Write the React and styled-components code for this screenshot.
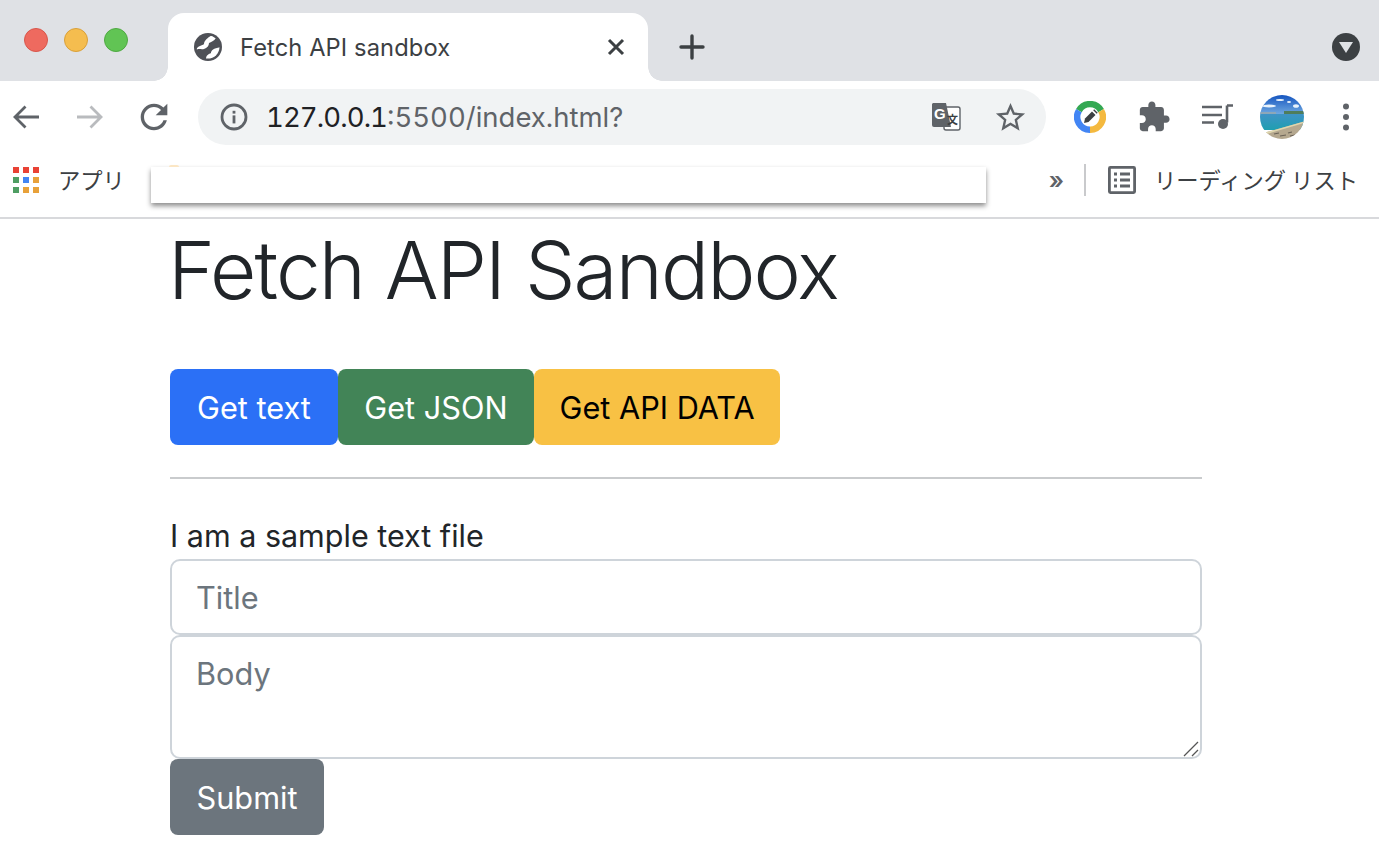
import React from 'react';
import styled, { createGlobalStyle } from 'styled-components';

const GlobalStyle = createGlobalStyle`
  * { box-sizing: border-box; }
  html, body { margin: 0; padding: 0; background: #fff; }
  body { font-family: Inter, "Noto Sans", sans-serif; color: #212529; }
`;

const colors = {
  strip: '#dfe1e5',
  icon: '#5f6368',
  dark: '#3c4043',
  omni: '#f1f3f4',
};

const App = () => {
  return (
    <>
      <GlobalStyle />
      <Header>
        <TabStrip>
          <Lights>
            <Light $color="#ee6a5f" $edge="#d8564b" />
            <Light $color="#f5bd4f" $edge="#d9a03a" />
            <Light $color="#61c454" $edge="#4fa942" />
          </Lights>
          <Tab>
            <svg width="28" height="28" viewBox="0 0 28 28">
              <defs>
                <clipPath id="globe">
                  <circle cx="14" cy="14" r="11.5" />
                </clipPath>
              </defs>
              <circle cx="14" cy="14" r="14" fill="#4f5157" />
              <g clipPath="url(#globe)" fill="#fff">
                <path d="M2 17C4 12 8 13 10 11 10 8 13 5 18 2L22 5C20 8 17 9 15 10 15 13 13 15 10 16 7 17 5 15 2 17z" />
                <path d="M12 26C12 22 15 21 17 20 17 17 20 15 27 14V19C24 23 18 27 12 26z" />
              </g>
            </svg>
            <TabTitle>Fetch API sandbox</TabTitle>
            <TabClose>
              <svg width="18" height="18" viewBox="0 0 18 18">
                <path d="M2 2l14 14M16 2L2 16" stroke={colors.dark} strokeWidth="3" />
              </svg>
            </TabClose>
          </Tab>
          <NewTab>
            <svg width="26" height="26" viewBox="0 0 26 26">
              <path d="M13 2v22M2 13h22" stroke={colors.dark} strokeWidth="3.4" strokeLinecap="round" />
            </svg>
          </NewTab>
          <TabMenu>
            <svg width="14" height="11" viewBox="0 0 14 11">
              <path d="M0 0h14L7 11z" fill={colors.strip} />
            </svg>
          </TabMenu>
        </TabStrip>

        <Toolbar>
          <Slot>
            <svg width="28" height="28" viewBox="0 0 28 28">
              <path d="M27 14H3M13.5 3.5L3 14l10.5 10.5" fill="none" stroke={colors.icon} strokeWidth="2.8" />
            </svg>
          </Slot>
          <Slot>
            <svg width="28" height="28" viewBox="0 0 28 28">
              <path d="M1 14h24M14.5 3.5L25 14 14.5 24.5" fill="none" stroke="#b9bbbe" strokeWidth="2.8" />
            </svg>
          </Slot>
          <Slot>
            <svg width="40" height="40" viewBox="0 0 24 24">
              <path fill={colors.icon} d="M17.65 6.35C16.2 4.9 14.21 4 12 4c-4.42 0-7.99 3.58-7.99 8s3.57 8 7.99 8c3.73 0 6.84-2.55 7.73-6h-2.08c-.82 2.33-3.04 4-5.65 4-3.31 0-6-2.69-6-6s2.69-6 6-6c1.66 0 3.14.69 4.22 1.78L13 11h7V4l-2.35 2.35z" />
            </svg>
          </Slot>
          <Omnibox>
            <Slot>
              <svg width="28" height="28" viewBox="0 0 28 28">
                <circle cx="14" cy="14" r="12" fill="none" stroke={colors.icon} strokeWidth="2.8" />
                <rect x="12.6" y="12.4" width="2.8" height="8" fill={colors.icon} />
                <rect x="12.6" y="7.8" width="2.8" height="2.8" fill={colors.icon} />
              </svg>
            </Slot>
            <Url>
              <UrlHost>127.0.0.1</UrlHost><UrlRest>:5500/index.html?</UrlRest>
            </Url>
            <Slot>
              <svg width="30" height="30" viewBox="0 0 30 30">
                <rect x="13" y="5" width="16" height="23" rx="2" fill="#fff" stroke={colors.icon} strokeWidth="1.4" />
                <path d="M2 1h13l5 24H3a2 2 0 0 1-2-2V2z" fill={colors.icon} />
                <GlyphText x="3" y="17" $size={15} $fill="#fff">G</GlyphText>
                <GlyphText x="16" y="22" $size={11} $fill={colors.dark}>文</GlyphText>
              </svg>
            </Slot>
            <Slot>
              <svg width="35" height="35" viewBox="0 0 24 24">
                <path fill={colors.icon} d="M22 9.24l-7.19-.62L12 2 9.19 8.63 2 9.24l5.46 4.73L5.82 21 12 17.27 18.18 21l-1.63-7.03L22 9.24zM12 15.4l-3.76 2.27 1-4.28-3.32-2.88 4.38-.38L12 6.1l1.71 4.04 4.38.38-3.32 2.88 1 4.28L12 15.4z" />
              </svg>
            </Slot>
          </Omnibox>
          <Slot>
            <svg width="32" height="32" viewBox="0 0 32 32">
              <path d="M4.9 9.6A12.75 12.75 0 0 1 27.1 9.6" fill="none" stroke="#34a853" strokeWidth="6.5" />
              <path d="M27.1 9.6A12.75 12.75 0 0 1 16 28.75" fill="none" stroke="#f4b93f" strokeWidth="6.5" />
              <path d="M16 28.75A12.75 12.75 0 0 1 4.9 9.6" fill="none" stroke="#4285f4" strokeWidth="6.5" />
              <path d="M10 22l1-4.5 7-7 3.5 3.5-7 7z" fill={colors.dark} />
              <path d="M19.2 9.3l1-1 3.5 3.5-1 1z" fill={colors.dark} />
            </svg>
          </Slot>
          <Slot>
            <svg width="34" height="34" viewBox="0 0 24 24">
              <path fill={colors.icon} d="M20.5 11H19V7c0-1.1-.9-2-2-2h-4V3.5C13 2.12 11.88 1 10.5 1S8 2.12 8 3.5V5H4c-1.1 0-1.99.9-1.99 2v3.8H3.5c1.49 0 2.7 1.21 2.7 2.7s-1.21 2.7-2.7 2.7H2V20c0 1.1.9 2 2 2h3.8v-1.5c0-1.49 1.21-2.7 2.7-2.7 1.49 0 2.7 1.21 2.7 2.7V22H17c1.1 0 2-.9 2-2v-4h1.5c1.38 0 2.5-1.12 2.5-2.5S21.88 11 20.5 11z" />
            </svg>
          </Slot>
          <Slot>
            <svg width="32" height="26" viewBox="0 0 32 26">
              <path d="M0 3h20M0 11h20M0 18.5h12" stroke={colors.icon} strokeWidth="2.6" />
              <path d="M25 1.5h6M25 1.5v17" stroke={colors.icon} strokeWidth="2.6" fill="none" />
              <circle cx="21" cy="20" r="5" fill={colors.icon} />
            </svg>
          </Slot>
          <Slot>
            <svg width="44" height="44" viewBox="0 0 44 44">
              <defs>
                <clipPath id="avatar">
                  <circle cx="22" cy="22" r="22" />
                </clipPath>
                <linearGradient id="sky" x1="0" y1="0" x2="0" y2="1">
                  <stop offset="0" stopColor="#1555c0" />
                  <stop offset="1" stopColor="#6fa8e0" />
                </linearGradient>
                <linearGradient id="sea" x1="0" y1="0" x2="0" y2="1">
                  <stop offset="0" stopColor="#3f93c6" />
                  <stop offset="1" stopColor="#1f9fb0" />
                </linearGradient>
              </defs>
              <g clipPath="url(#avatar)">
                <rect width="44" height="19" fill="url(#sky)" />
                <ellipse cx="9" cy="11" rx="7" ry="1.5" fill="#e8f2fb" />
                <ellipse cx="20" cy="5" rx="4" ry="1" fill="#e8f2fb" />
                <ellipse cx="29" cy="7" rx="2" ry="1" fill="#e8f2fb" />
                <ellipse cx="36" cy="11" rx="3" ry="1.8" fill="#e8f2fb" />
                <rect x="0" y="17" width="16" height="2" fill="#8da7b8" />
                <rect x="24" y="16" width="20" height="3" fill="#4f7d5c" />
                <rect y="19" width="44" height="16" fill="url(#sea)" />
                <path d="M0 39L44 26.5V44H0z" fill="#b5a88f" />
                <path d="M0 39L44 26.5v1.6L0 41z" fill="#dfd6ae" />
                <path d="M14 39l5-1M20 41l6-1M28 38l4-1M30 41l5-1" stroke="#6b6357" strokeWidth="1.2" />
              </g>
            </svg>
          </Slot>
          <Slot>
            <svg width="6" height="28" viewBox="0 0 6 28">
              <circle cx="3" cy="3.5" r="3" fill={colors.icon} />
              <circle cx="3" cy="14" r="3" fill={colors.icon} />
              <circle cx="3" cy="24.5" r="3" fill={colors.icon} />
            </svg>
          </Slot>
        </Toolbar>

        <BookmarksBar>
          <AppsIcon>
            {['#e94235', '#e94235', '#e94235', '#4f9e63', '#4285f4', '#e8a13a', '#4f9e63', '#e8a13a', '#e8a13a'].map((c, i) => (
              <AppsDot key={i} $color={c} />
            ))}
          </AppsIcon>
          <BookmarkLabel>アプリ</BookmarkLabel>
          <Overflow>»</Overflow>
          <BarDivider />
          <svg width="28" height="28" viewBox="0 0 28 28">
            <rect x="1.4" y="1.4" width="25.2" height="25.2" rx="1" fill="none" stroke={colors.icon} strokeWidth="2.8" />
            <path d="M6 8h3M12 8h10M6 14h3M12 14h10M6 20h3M12 20h10" stroke={colors.icon} strokeWidth="2.8" />
          </svg>
          <ReadingLabel>リーディング リスト</ReadingLabel>
          <Popover />
          <PopoverDot />
        </BookmarksBar>
      </Header>

      <Main>
        <Title>Fetch API Sandbox</Title>
        <ButtonRow>
          <Button $bg="#2b70f6" $pad={27}>Get text</Button>
          <Button $bg="#428457" $pad={26.5}>Get JSON</Button>
          <Button $bg="#f8c144" $fg="#000" $pad={25.5}>Get API DATA</Button>
        </ButtonRow>
        <Rule />
        <Output>I am a sample text file</Output>
        <Form>
          <Field placeholder="Title" />
          <AreaWrap>
            <Area placeholder="Body" />
            <Grip width="16" height="16" viewBox="0 0 16 16">
              <path d="M1 15L15 1M9 15l6-6" stroke="#555" strokeWidth="1.3" />
            </Grip>
          </AreaWrap>
          <div>
            <Button $bg="#6c757d" $pad={26.5} type="button">Submit</Button>
          </div>
        </Form>
      </Main>
    </>
  );
};

const Header = styled.header`
  display: flex;
  flex-direction: column;
`;

const TabStrip = styled.div`
  display: flex;
  height: 81px;
  background: ${colors.strip};
`;

const Lights = styled.div`
  display: flex;
  gap: 16px;
  padding: 28px 0 0 24px;
`;

const Light = styled.span`
  width: 24px;
  height: 24px;
  border-radius: 50%;
  background: ${p => p.$color};
  border: 1px solid ${p => p.$edge};
`;

const Tab = styled.div`
  position: relative;
  display: flex;
  align-items: center;
  align-self: flex-end;
  width: 480px;
  height: 68px;
  margin-left: 40px;
  padding: 0 23px 0 26px;
  background: #fff;
  border-radius: 16px 16px 0 0;

  &::before,
  &::after {
    content: '';
    position: absolute;
    bottom: 0;
    width: 14px;
    height: 14px;
  }
  &::before {
    left: -14px;
    background: radial-gradient(circle at 0 0, transparent 13.5px, #fff 14px);
  }
  &::after {
    right: -14px;
    background: radial-gradient(circle at 100% 0, transparent 13.5px, #fff 14px);
  }
`;

const TabTitle = styled.span`
  margin-left: 18px;
  flex: 1;
  font-size: 23.7px;
  letter-spacing: 0.1px;
  color: ${colors.dark};
`;

const TabClose = styled.span`
  display: flex;
`;

const NewTab = styled.span`
  display: flex;
  align-items: center;
  align-self: flex-end;
  height: 68px;
  margin-left: 31px;
`;

const TabMenu = styled.span`
  display: flex;
  align-items: center;
  justify-content: center;
  width: 28px;
  height: 28px;
  margin: 33px 19px 0 auto;
  border-radius: 50%;
  background: ${colors.dark};
`;

const Toolbar = styled.div`
  display: flex;
  align-items: center;
  gap: 24px;
  height: 72px;
  padding-left: 6px;
  background: #fff;
`;

const Slot = styled.span`
  display: flex;
  flex: none;
  align-items: center;
  justify-content: center;
  width: 40px;
  height: 44px;

  svg {
    flex: none;
  }
`;

const Omnibox = styled.div`
  display: flex;
  align-items: center;
  gap: 24px;
  width: 848px;
  height: 56px;
  padding: 0 16px;
  border-radius: 28px;
  background: ${colors.omni};
`;

const Url = styled.div`
  flex: 1;
  margin-left: -12px;
  font-size: 27.5px;
  color: #202124;
`;

const UrlHost = styled.span`
  font-variant-numeric: tabular-nums;
  letter-spacing: -0.9px;
`;

const UrlRest = styled.span`
  font-variant-numeric: tabular-nums;
  color: #5f6368;
`;

const GlyphText = styled.text`
  font-family: "Liberation Sans", "Noto Sans CJK JP", sans-serif;
  font-weight: 700;
  font-size: ${p => p.$size}px;
  fill: ${p => p.$fill};
`;

const BookmarksBar = styled.div`
  position: relative;
  display: flex;
  align-items: center;
  height: 66px;
  padding: 0 21px 10px 13px;
  background: #fff;
  border-bottom: 2px solid #d8d9dc;
`;

const AppsIcon = styled.div`
  display: grid;
  grid-template-columns: repeat(3, 6px);
  grid-auto-rows: 6px;
  gap: 4px;
`;

const AppsDot = styled.span`
  background: ${p => p.$color};
`;

const BookmarkLabel = styled.span`
  margin: 0 0 2px 19px;
  font-family: "Noto Sans CJK JP", sans-serif;
  font-size: 22.3px;
  color: ${colors.dark};
`;

const Overflow = styled.span`
  margin-left: auto;
  font-size: 24px;
  font-weight: 600;
  color: ${colors.icon};
`;

const BarDivider = styled.span`
  width: 2px;
  height: 32px;
  margin: 0 22px 0 20px;
  background: #c9cacc;
`;

const ReadingLabel = styled.span`
  margin: 0 0 2px 18px;
  font-family: "Noto Sans CJK JP", sans-serif;
  font-size: 22.3px;
  color: ${colors.dark};
`;

const Popover = styled.div`
  position: absolute;
  left: 151px;
  top: 14px;
  width: 835px;
  height: 36px;
  background: #fff;
  box-shadow: 0 3px 5px rgba(0, 0, 0, 0.45);
`;

const PopoverDot = styled.span`
  position: absolute;
  left: 169px;
  top: 12px;
  width: 10px;
  height: 2px;
  border-radius: 2px 2px 0 0;
  background: #fbe6c4;
`;

const Main = styled.main`
  width: 1032px;
  margin-left: 170px;
`;

const Title = styled.h1`
  margin: 0 0 0 -2px;
  height: 150px;
  font-size: 80px;
  font-weight: 300;
  line-height: 102px;
  letter-spacing: -1.85px;
`;

const ButtonRow = styled.div`
  display: flex;
`;

const Button = styled.button`
  height: 76px;
  padding: 0 ${p => p.$pad}px;
  border: 0;
  border-radius: 8px;
  font-family: Inter, sans-serif;
  font-size: 30.7px;
  background: ${p => p.$bg};
  color: ${p => p.$fg || '#fff'};
`;

const Rule = styled.hr`
  height: 2px;
  margin: 32px 0 0;
  border: 0;
  background: #c9cbcd;
`;

const Output = styled.div`
  margin-top: 34px;
  height: 46px;
  font-size: 30.5px;
  line-height: 46px;
`;

const Form = styled.form`
  display: flex;
  flex-direction: column;
`;

const controlStyles = `
  display: block;
  width: 100%;
  padding: 17px 24px;
  border: 2px solid #ced4da;
  border-radius: 10px;
  outline: none;
  font-family: Inter, sans-serif;
  font-size: 30.7px;
  line-height: 40px;
  color: #212529;
  background: #fff;
  &::placeholder { color: #6c757d; opacity: 1; }
`;

const Field = styled.input`
  ${controlStyles}
  height: 76px;
`;

const AreaWrap = styled.div`
  position: relative;
  display: flex;
`;

const Area = styled.textarea`
  ${controlStyles}
  height: 124px;
  resize: none;
`;

const Grip = styled.svg`
  position: absolute;
  right: 3px;
  bottom: 2px;
`;

export default App;
